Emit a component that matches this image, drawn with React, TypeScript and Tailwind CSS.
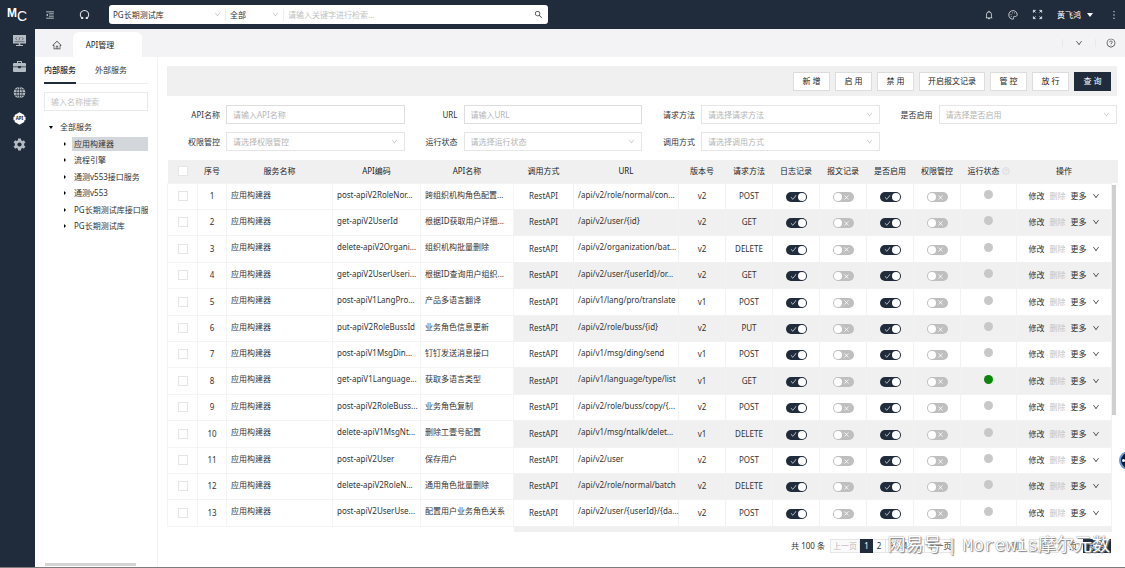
import React, { useState } from 'react';
import {
  AiOutlineMenuFold,
  AiOutlineHome,
  AiOutlineBell,
  AiOutlineDown,
  AiOutlineQuestionCircle,
  AiOutlineSearch,
  AiOutlineCheck,
  AiOutlineClose,
  AiOutlineMore,
} from 'react-icons/ai';
import { clsx } from 'clsx';

interface ApiRow {
  code: string;
  name: string;
  url: string;
  version: string;
  method: string;
  running?: boolean;
}

const rows: ApiRow[] = [
  { code: 'post-apiV2RoleNor...', name: '跨组织机构角色配置...', url: '/api/v2/role/normal/con...', version: 'v2', method: 'POST' },
  { code: 'get-apiV2UserId', name: '根据ID获取用户详细...', url: '/api/v2/user/{id}', version: 'v2', method: 'GET' },
  { code: 'delete-apiV2Organi...', name: '组织机构批量删除', url: '/api/v2/organization/bat...', version: 'v2', method: 'DELETE' },
  { code: 'get-apiV2UserUseri...', name: '根据ID查询用户组织...', url: '/api/v2/user/{userId}/or...', version: 'v2', method: 'GET' },
  { code: 'post-apiV1LangPro...', name: '产品多语言翻译', url: '/api/v1/lang/pro/translate', version: 'v1', method: 'POST' },
  { code: 'put-apiV2RoleBussId', name: '业务角色信息更新', url: '/api/v2/role/buss/{id}', version: 'v2', method: 'PUT' },
  { code: 'post-apiV1MsgDin...', name: '钉钉发送消息接口', url: '/api/v1/msg/ding/send', version: 'v1', method: 'POST' },
  { code: 'get-apiV1Language...', name: '获取多语言类型', url: '/api/v1/language/type/list', version: 'v1', method: 'GET', running: true },
  { code: 'post-apiV2RoleBuss...', name: '业务角色复制', url: '/api/v2/role/buss/copy/{...', version: 'v2', method: 'POST' },
  { code: 'delete-apiV1MsgNt...', name: '删除工壹号配置', url: '/api/v1/msg/ntalk/delet...', version: 'v1', method: 'DELETE' },
  { code: 'post-apiV2User', name: '保存用户', url: '/api/v2/user', version: 'v2', method: 'POST' },
  { code: 'delete-apiV2RoleN...', name: '通用角色批量删除', url: '/api/v2/role/normal/batch', version: 'v2', method: 'DELETE' },
  { code: 'post-apiV2UserUse...', name: '配置用户业务角色关系', url: '/api/v2/user/{userId}/{da...', version: 'v2', method: 'POST' },
];

const services = ['应用构建器', '流程引擎', '通测v553接口服务', '通测v553', 'PG长期测试库接口服务', 'PG长期测试库'];

const actions = ['新 增', '启 用', '禁 用', '开启报文记录', '管 控', '放 行'];

const filters = [
  { id: 'apiName', label: 'API名称', hint: '请输入API名称', select: false },
  { id: 'url', label: 'URL', hint: '请输入URL', select: false },
  { id: 'method', label: '请求方法', hint: '请选择请求方法', select: true },
  { id: 'enabled', label: '是否启用', hint: '请选择是否启用', select: true },
  { id: 'auth', label: '权限管控', hint: '请选择权限管控', select: true },
  { id: 'state', label: '运行状态', hint: '请选择运行状态', select: true },
  { id: 'callType', label: '调用方式', hint: '请选择调用方式', select: true },
];

function Switch({ initial, label }: { initial: boolean; label: string }) {
  const [on, setOn] = useState(initial);
  return (
    <button
      role="switch"
      aria-checked={on}
      aria-label={label}
      onClick={() => setOn(!on)}
      className={clsx(
        'mx-auto mt-[2px] flex h-[10px] w-[21px] items-center justify-between rounded-full px-px text-white',
        on ? 'bg-[#202c3b]' : 'flex-row-reverse bg-[#bfbfbf]'
      )}
    >
      {on ? <AiOutlineCheck className="ml-[3px] size-[7px]" /> : <AiOutlineClose className="mr-[3px] size-[7px]" />}
      <span className="size-2 rounded-full bg-white" />
    </button>
  );
}

function Tick({ label }: { label: string }) {
  return (
    <input
      type="checkbox"
      aria-label={label}
      className="mx-auto block size-[10px] appearance-none border border-[#e6e6e6] bg-white checked:bg-[#202c3b]"
    />
  );
}

function TopBar() {
  return (
    <header className="flex h-[29px] shrink-0 items-center bg-[#202c3b] text-[#e4e7ea]">
      <a href="#" aria-label="MC" className="flex w-[35px] items-start pl-[7px] font-['Liberation_Sans',sans-serif] text-white">
        <span className="text-[12px] leading-[13px] font-bold">M</span>
        <span className="pt-[3px] text-[14px] leading-[12px]">C</span>
      </a>
      <button aria-label="折叠菜单" className="ml-[10px]">
        <AiOutlineMenuFold className="size-[10px]" />
      </button>
      <button aria-label="刷新" className="ml-[24px]">
        <svg viewBox="0 0 12 12" className="size-[11px]" fill="none" stroke="currentColor" strokeWidth="1.1">
          <path d="M3.8 10.2A4.6 4.6 0 1 1 8.2 10.2M2.300 10.300h1.800V8.700M9.700 10.300H7.900V8.700" />
        </svg>
      </button>
      <div className="ml-[19px] flex h-[19px] w-[439px] items-center rounded-[3px] bg-white text-[#333]">
        <div className="relative flex w-[117px] items-center border-r border-[#eee]">
          <select aria-label="数据库" className="w-full appearance-none bg-transparent pl-1 outline-none">
            <option>PG长期测试库</option>
          </select>
          <AiOutlineDown className="pointer-events-none absolute right-1 size-[7px] text-[#bbb]" />
        </div>
        <div className="relative flex w-[58px] items-center border-r border-[#eee]">
          <select aria-label="范围" className="w-full appearance-none bg-transparent pl-1 outline-none">
            <option>全部</option>
          </select>
          <AiOutlineDown className="pointer-events-none absolute right-1 size-[7px] text-[#bbb]" />
        </div>
        <input
          aria-label="检索"
          placeholder="请输入关键字进行检索..."
          className="min-w-0 flex-1 pl-1 outline-none placeholder:text-[#bfbfbf]"
        />
        <button aria-label="搜索" className="mr-[5px]">
          <AiOutlineSearch className="size-[9px]" />
        </button>
      </div>
      <div className="ml-auto flex items-center pr-[5px]">
        <button aria-label="通知">
          <AiOutlineBell className="size-[10px]" />
        </button>
        <button aria-label="主题" className="ml-[14px]">
          <svg viewBox="0 0 12 12" className="size-[10px]" fill="none" stroke="currentColor">
            <path d="M6 11C2.8 11 1 8.700 1 6a5 5 0 0 1 10-.5C11 7.500 9.500 8 8 7.700 6.500 7.500 6.300 8.500 6.800 9.500 7.100 10.300 6.800 11 6 11z" />
            <path d="M3.200 5.500h.8M4.800 3.500h.8M7.500 3.500h.8M3.500 7.700h.8" strokeWidth="1.200" />
          </svg>
        </button>
        <button aria-label="全屏" className="ml-[14px]">
          <svg viewBox="0 0 12 12" className="size-[11px]" fill="none" stroke="currentColor">
            <path d="M1.500 4V1.500H4M1.500 1.500l2.300 2.300M8 1.500h2.500V4M10.500 1.500 8.200 3.800M10.500 8v2.500H8M10.500 10.500 8.200 8.200M4 10.500H1.500V8M1.500 10.500l2.300-2.300" />
          </svg>
        </button>
        <button className="ml-[14px] flex items-center gap-[6px] text-white">
          黄飞鸿
          <span className="h-0 w-0 border-x-[3px] border-t-[4px] border-x-transparent border-t-white" />
        </button>
        <button aria-label="更多" className="ml-[15px]">
          <AiOutlineMore className="size-[12px]" />
        </button>
      </div>
    </header>
  );
}

function SideBar() {
  return (
    <nav className="flex w-[35px] shrink-0 flex-col items-center gap-[13px] bg-[#202c3b] pt-[5px] pl-[3px] text-[#b5bbc2]">
      <button aria-label="开发">
        <svg viewBox="0 0 13 13" className="size-[13px]">
          <path fill="currentColor" d="M0 1h13v8.500H7.300v1.500H10v1H3v-1h2.700V9.500H0z" />
          <path stroke="#202c3b" strokeWidth=".5" fill="none" d="M1.500 7.700h10M4 3.200 2.700 4.700 4 6.200M9 3.200l1.300 1.500L9 6.200M7 3 6 6.400" />
        </svg>
      </button>
      <button aria-label="工具箱">
        <svg viewBox="0 0 13 13" className="size-[13px]" fill="currentColor">
          <path d="M4 1h5v2h3a1 1 0 0 1 1 1v2.500H8V6H5v.5H0V4a1 1 0 0 1 1-1h3zm1 1v1h3V2z" />
          <path d="M0 7.300h5.200v1h2.600v-1H13V11a1 1 0 0 1-1 1H1a1 1 0 0 1-1-1z" />
        </svg>
      </button>
      <button aria-label="全局">
        <svg viewBox="0 0 13 13" className="size-[13px]">
          <circle cx="6.500" cy="6.500" r="5.800" fill="currentColor" />
          <path stroke="#202c3b" strokeWidth=".7" fill="none" d="M6.500.7v11.600M.7 6.500h11.600M1.500 3.700h10M1.500 9.300h10" />
          <ellipse cx="6.500" cy="6.500" rx="2.800" ry="5.800" stroke="#202c3b" strokeWidth=".7" fill="none" />
        </svg>
      </button>
      <button aria-label="API" className="text-white">
        <svg viewBox="0 0 13 13" className="size-[13px]">
          <path fill="currentColor" d="M6.500.3 11.300 3v1.700h1.200v3.600h-1.200V10l-4.800 2.700L1.700 10V8.300H.5V4.700h1.200V3z" />
          <text x="6.500" y="8.100" fontSize="4.500" fontWeight="700" textAnchor="middle" fill="#202c3b">API</text>
        </svg>
      </button>
      <button aria-label="设置">
        <svg viewBox="0 0 13 13" className="size-[13px]">
          <g stroke="currentColor" strokeWidth="3">
            <path d="M6.500.5v12M1.300 3.500l10.400 6M1.300 9.500l10.400-6" />
          </g>
          <circle cx="6.500" cy="6.500" r="4.600" fill="currentColor" />
          <circle cx="6.500" cy="6.500" r="2.100" fill="#202c3b" />
        </svg>
      </button>
    </nav>
  );
}

function TabBar() {
  return (
    <div className="flex h-[28px] shrink-0 items-end bg-[#f3f3f5]">
      <button aria-label="首页" className="flex h-[25px] w-[38px] items-center justify-center pl-[6px]">
        <AiOutlineHome className="size-[10px] text-[#444]" />
      </button>
      <button className="h-[25px] w-[69px] rounded-t-[6px] bg-white pr-[15px] text-[#222]">API管理</button>
      <div className="ml-auto flex h-full items-center pr-[9px] text-[#444]">
        <button aria-label="标签页列表" className="flex h-2 items-center border-x border-[#e8e8ea] px-3">
          <AiOutlineDown className="size-[8px]" />
        </button>
        <button aria-label="帮助" className="ml-[10px]">
          <AiOutlineQuestionCircle className="size-[10px]" />
        </button>
      </div>
    </div>
  );
}

function ServiceTree() {
  const [active, setActive] = useState('应用构建器');
  return (
    <aside className="flex w-[123px] shrink-0 flex-col border-r border-[#f2f2f2] px-[9px]">
      <div className="flex h-[27px] shrink-0 gap-[19px] border-b border-[#eee]">
        <button className="h-[27px] border-b-2 border-[#202c3b] font-medium text-[#202c3b]">内部服务</button>
        <button className="h-[27px] border-b-2 border-transparent">外部服务</button>
      </div>
      <input
        aria-label="服务名称"
        placeholder="输入名称搜索"
        className="mt-[8px] h-[19px] w-full shrink-0 border border-[#eaeaea] px-[6px] outline-none placeholder:text-[#bfbfbf]"
      />
      <ul className="mt-[8px]">
        <li>
          <div className="flex h-[16px] items-center pl-[5px]">
            <span className="h-0 w-0 border-x-[2px] border-t-[3px] border-x-transparent border-t-black" />
            <span className="ml-[7px]">全部服务</span>
          </div>
          <ul>
            {services.map((s, i) => (
              <li key={s} className={clsx('flex items-center pl-[20px]', i % 2 ? 'h-[16px]' : 'h-[17px]')}>
                <span className="h-0 w-0 shrink-0 border-y-[2px] border-l-[2px] border-y-transparent border-l-black" />
                <button
                  onClick={() => setActive(s)}
                  className={clsx(
                    'ml-[6px] h-[14px] min-w-0 flex-1 overflow-hidden pl-[2px] text-left whitespace-nowrap',
                    s === active && 'bg-[#d3d6da]'
                  )}
                >
                  {s}
                </button>
              </li>
            ))}
          </ul>
        </li>
      </ul>
      <div className="mt-auto mb-px ml-px h-[3px] w-[91px] bg-[#d4d4d4]" />
    </aside>
  );
}

function Filters() {
  return (
    <form className="mt-[9px] grid grid-cols-4 gap-y-2">
      {filters.map((f) => (
        <div key={f.id} className="flex items-center">
          <label htmlFor={f.id} className="w-[59px] shrink-0 pr-[6px] text-right">
            {f.label}
          </label>
          {f.select ? (
            <div className="relative flex h-[19px] min-w-0 flex-1 items-center border border-[#e6e6e6]">
              <select id={f.id} className="w-full appearance-none bg-transparent pl-[6px] text-[#b5b5b5] outline-none">
                <option>{f.hint}</option>
              </select>
              <AiOutlineDown className="pointer-events-none absolute right-[6px] size-[7px] text-[#bbb]" />
            </div>
          ) : (
            <input
              id={f.id}
              placeholder={f.hint}
              className="h-[19px] min-w-0 flex-1 border border-[#dedede] px-[6px] outline-none placeholder:text-[#b5b5b5]"
            />
          )}
        </div>
      ))}
    </form>
  );
}

function ApiTable() {
  return (
    <div className="relative mt-[9px]">
      <table className="w-full table-fixed border-collapse">
        <colgroup>
          <col className="w-[30px]" />
          <col className="w-[29px]" />
          <col className="w-[106px]" />
          <col className="w-[88px]" />
          <col className="w-[93px]" />
          <col className="w-[60px]" />
          <col className="w-[105px]" />
          <col className="w-[47px]" />
          <col className="w-[47px]" />
          <col className="w-[47px]" />
          <col className="w-[47px]" />
          <col className="w-[47px]" />
          <col className="w-[47px]" />
          <col className="w-[56px]" />
          <col className="w-[95px]" />
          <col className="w-[6px]" />
        </colgroup>
        <thead>
          <tr className="h-[23px] bg-[#f0f0f0] text-[#222] [&>th]:p-0 [&>th]:font-normal [&>th]:whitespace-nowrap">
            <th><Tick label="全选" /></th>
            <th>序号</th>
            <th>服务名称</th>
            <th>API编码</th>
            <th>API名称</th>
            <th>调用方式</th>
            <th>URL</th>
            <th>版本号</th>
            <th>请求方法</th>
            <th>日志记录</th>
            <th>报文记录</th>
            <th>是否启用</th>
            <th>权限管控</th>
            <th>
              <span className="flex items-center justify-center gap-[2px]">
                运行状态
                <AiOutlineQuestionCircle className="size-[8px] text-[#ccc]" />
              </span>
            </th>
            <th>操作</th>
            <th />
          </tr>
        </thead>
        <tbody>
          {rows.map((r, i) => {
            const cell = clsx('border border-[#f2f2f2] p-0 text-center whitespace-nowrap', i % 2 === 1 && 'bg-[#f0f0f0]');
            const fixed = 'border border-[#f4f4f4] p-0 whitespace-nowrap';
            return (
              <tr key={r.code} className={i % 5 === 2 || i % 5 === 4 ? 'h-[27px]' : 'h-[26px]'}>
                <td className={fixed}><Tick label={`选择第${i + 1}行`} /></td>
                <td className={clsx(fixed, 'text-center')}>{i + 1}</td>
                <td className={clsx(fixed, 'pb-[3px] pl-1')}>应用构建器</td>
                <td className={clsx(fixed, 'pb-[3px] pl-1')}>{r.code}</td>
                <td className={clsx(fixed, 'pb-[3px] pl-1')}>{r.name}</td>
                <td className={cell}>RestAPI</td>
                <td className={clsx(cell, 'pb-[3px] pl-1 text-left')}>{r.url}</td>
                <td className={cell}>{r.version}</td>
                <td className={cell}>{r.method}</td>
                <td className={cell}><Switch initial label="日志记录" /></td>
                <td className={cell}><Switch initial={false} label="报文记录" /></td>
                <td className={cell}><Switch initial label="是否启用" /></td>
                <td className={cell}><Switch initial={false} label="权限管控" /></td>
                <td className={clsx(cell, 'pb-[3px]')}>
                  <span className={clsx('mx-auto block size-[9px] rounded-full', r.running ? 'bg-[#0a870a]' : 'bg-[#c8c8c8]')} />
                </td>
                <td className={cell}>
                  <span className="flex items-center justify-center gap-[5px]">
                    <button>修改</button>
                    <button className="text-[#c4c4c4]">删除</button>
                    <button className="flex items-center gap-[5px]">
                      更多
                      <AiOutlineDown className="size-[8px]" />
                    </button>
                  </span>
                </td>
                <td />
              </tr>
            );
          })}
          <tr className="h-[6px]">
            <td colSpan={5} />
            <td colSpan={10} className="bg-[#f0f0f0]" />
            <td />
          </tr>
        </tbody>
      </table>
      <div className="absolute top-[25px] right-px h-[230px] w-1 bg-[#d0d0d0]" />
    </div>
  );
}

function Pager() {
  return (
    <div className="relative mt-[6px] flex h-[15px] items-center justify-end pr-[6px]">
      <span className="mr-[5px]">共 100 条</span>
      <button className="h-[14px] w-[30px] border border-[#e6e6e6] bg-[#fafafa] text-[#bbb]">上一页</button>
      <button className="h-[14px] w-[13px] bg-[#202c3b] text-white">1</button>
      {[2, 3, 4, 5].map((n) => (
        <button key={n} className="h-[14px] w-[13px] border-y border-r border-[#e6e6e6]">{n}</button>
      ))}
      <button className="h-[14px] w-[30px] border-y border-r border-[#e6e6e6]">下一页</button>
      <label htmlFor="page" className="ml-[56px]">到</label>
      <input id="page" defaultValue="1" className="ml-[10px] h-[14px] w-[30px] border border-[#e6e6e6] text-center outline-none" />
      <span className="ml-[10px]">页</span>
      <button className="ml-[6px] h-[14px] w-[28px] bg-[#202c3b] text-white">跳转</button>
      <span className="pointer-events-none absolute right-[7px] flex gap-[5px] font-['Liberation_Mono','Noto_Sans_CJK_SC',monospace] text-[18px] leading-[20px] whitespace-nowrap text-white [text-shadow:0_0_1px_#666,1px_1px_1px_#888]">
        <span>网易号</span>
        <span>|</span>
        <span>Morewis摩尔元数</span>
      </span>
    </div>
  );
}

export default function App() {
  return (
    <div
      lang="zh-CN"
      className="relative flex h-screen flex-col overflow-hidden border-b border-[#7d7d7d] bg-white font-['Noto_Sans','Noto_Sans_CJK_SC',sans-serif] text-[8px] leading-[12px] text-[#333]"
    >
      <TopBar />
      <div className="flex min-h-0 flex-1">
        <SideBar />
        <div className="flex min-w-0 flex-1 flex-col">
          <TabBar />
          <div className="flex min-h-0 flex-1">
            <ServiceTree />
            <main className="min-w-0 flex-1 pt-[9px] pr-2 pl-[9px]">
              <div className="flex h-[30px] items-center justify-end gap-[5px] bg-[#f0f0f0] pr-[6px]">
                {actions.map((a) => (
                  <button key={a} className="h-[19px] min-w-[37px] border border-[#ddd] bg-white px-2 text-[#222]">
                    {a}
                  </button>
                ))}
                <button className="h-[19px] min-w-[37px] bg-[#202c3b] px-[9px] text-white">查 询</button>
              </div>
              <Filters />
              <ApiTable />
              <Pager />
            </main>
          </div>
        </div>
      </div>
      <button
        aria-label="助手"
        className="absolute top-[451px] -right-[13px] flex size-[19px] items-center rounded-full border-2 border-[#5a9be6] bg-[#0b1a33] pl-px text-white"
      >
        <span className="size-[3px] rounded-full bg-white" />
      </button>
    </div>
  );
}
